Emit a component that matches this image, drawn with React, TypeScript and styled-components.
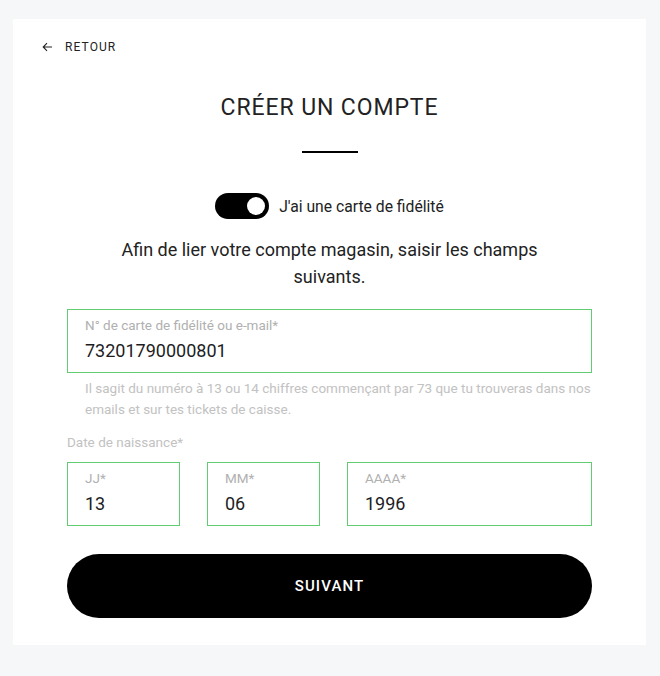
import React from 'react';
import styled, { createGlobalStyle } from 'styled-components';

const GlobalStyle = createGlobalStyle`
  body {
    margin: 0;
    background: #f6f7f9;
    font-family: Roboto, "Liberation Sans", sans-serif;
    color: #1d1d1f;
  }
`;

const App = () => {
  return (
    <>
      <GlobalStyle />
      <Page>
        <Card>
          <BackLink>
            <svg width="11" height="10" viewBox="0 0 11 10" fill="none">
              <path d="M10 5H1.5M5 1.2L1.2 5L5 8.8" stroke="#222" strokeWidth="1.1" />
            </svg>
            RETOUR
          </BackLink>
          <Title>CRÉER UN COMPTE</Title>
          <Divider />
          <ToggleRow>
            <Toggle $on>
              <Knob />
            </Toggle>
            <ToggleLabel>J'ai une carte de fidélité</ToggleLabel>
          </ToggleRow>
          <Intro>Afin de lier votre compte magasin, saisir les champs suivants.</Intro>
          <Form>
            <Field>
              <FieldLabel>N° de carte de fidélité ou e-mail*</FieldLabel>
              <FieldValue>73201790000801</FieldValue>
            </Field>
            <Help>
              Il sagit du numéro à 13 ou 14 chiffres commençant par 73 que tu trouveras dans nos
              emails et sur tes tickets de caisse.
            </Help>
            <GroupLabel>Date de naissance*</GroupLabel>
            <DateRow>
              <Field>
                <FieldLabel>JJ*</FieldLabel>
                <FieldValue>13</FieldValue>
              </Field>
              <Field>
                <FieldLabel>MM*</FieldLabel>
                <FieldValue>06</FieldValue>
              </Field>
              <Field>
                <FieldLabel>AAAA*</FieldLabel>
                <FieldValue>1996</FieldValue>
              </Field>
            </DateRow>
            <SubmitButton>SUIVANT</SubmitButton>
          </Form>
        </Card>
      </Page>
    </>
  );
};

export default App;

const Page = styled.div`
  padding: 19px 14px 31px 13px;
`;

const Card = styled.div`
  background: #ffffff;
  height: 626px;
  box-sizing: border-box;
  padding: 20px 54px 27px 54px;
  display: flex;
  flex-direction: column;
  align-items: center;
`;

const BackLink = styled.a`
  align-self: flex-start;
  margin-left: -25px;
  display: flex;
  align-items: center;
  gap: 12px;
  font-size: 12px;
  letter-spacing: 1.1px;
  color: #222;
  height: 16px;
`;

const Title = styled.h1`
  margin: 39px 0 0;
  font-size: 23px;
  font-weight: 400;
  letter-spacing: 0.9px;
  line-height: 28px;
  color: #222;
`;

const Divider = styled.div`
  width: 56px;
  height: 2px;
  background: #000;
  margin-top: 29px;
`;

const ToggleRow = styled.div`
  display: flex;
  align-items: center;
  gap: 10px;
  margin-top: 40px;
`;

const Toggle = styled.div<{ $on?: boolean }>`
  width: 54px;
  height: 26px;
  border-radius: 13px;
  background: ${(p) => (p.$on ? '#000' : '#ccc')};
  display: flex;
  align-items: center;
  justify-content: ${(p) => (p.$on ? 'flex-end' : 'flex-start')};
  padding: 0 4px;
  box-sizing: border-box;
`;

const Knob = styled.div`
  width: 18px;
  height: 18px;
  border-radius: 50%;
  background: #fff;
`;

const ToggleLabel = styled.span`
  font-size: 15.7px;
  color: #222;
`;

const Intro = styled.p`
  margin: 17px 0 0;
  max-width: 450px;
  text-align: center;
  font-size: 18px;
  line-height: 27px;
  color: #222;
`;

const Form = styled.div`
  align-self: stretch;
  display: flex;
  flex-direction: column;
  margin-top: 19px;
`;

const Field = styled.div`
  height: 64px;
  box-sizing: border-box;
  border: 1px solid #62cc73;
  padding: 6px 17px 0;
  display: flex;
  flex-direction: column;
`;

const FieldLabel = styled.span`
  font-size: 13.5px;
  line-height: 18px;
  color: #b0b0b0;
`;

const FieldValue = styled.span`
  margin-top: 6px;
  font-size: 18px;
  line-height: 22px;
  color: #1d1d1f;
`;

const Help = styled.p`
  margin: 5px 0 0;
  padding-left: 18px;
  font-size: 13.5px;
  line-height: 21px;
  color: #c2c2c2;
`;

const GroupLabel = styled.span`
  margin-top: 13px;
  font-size: 13.5px;
  line-height: 18px;
  color: #c2c2c2;
`;

const DateRow = styled.div`
  display: grid;
  grid-template-columns: 113px 113px 1fr;
  gap: 27px;
  margin-top: 11px;
`;

const SubmitButton = styled.button`
  margin-top: 28px;
  height: 64px;
  border: none;
  border-radius: 32px;
  background: #000;
  color: #fff;
  font-family: Roboto, "Liberation Sans", sans-serif;
  font-size: 15px;
  font-weight: 500;
  letter-spacing: 1.1px;
  cursor: pointer;
`;
